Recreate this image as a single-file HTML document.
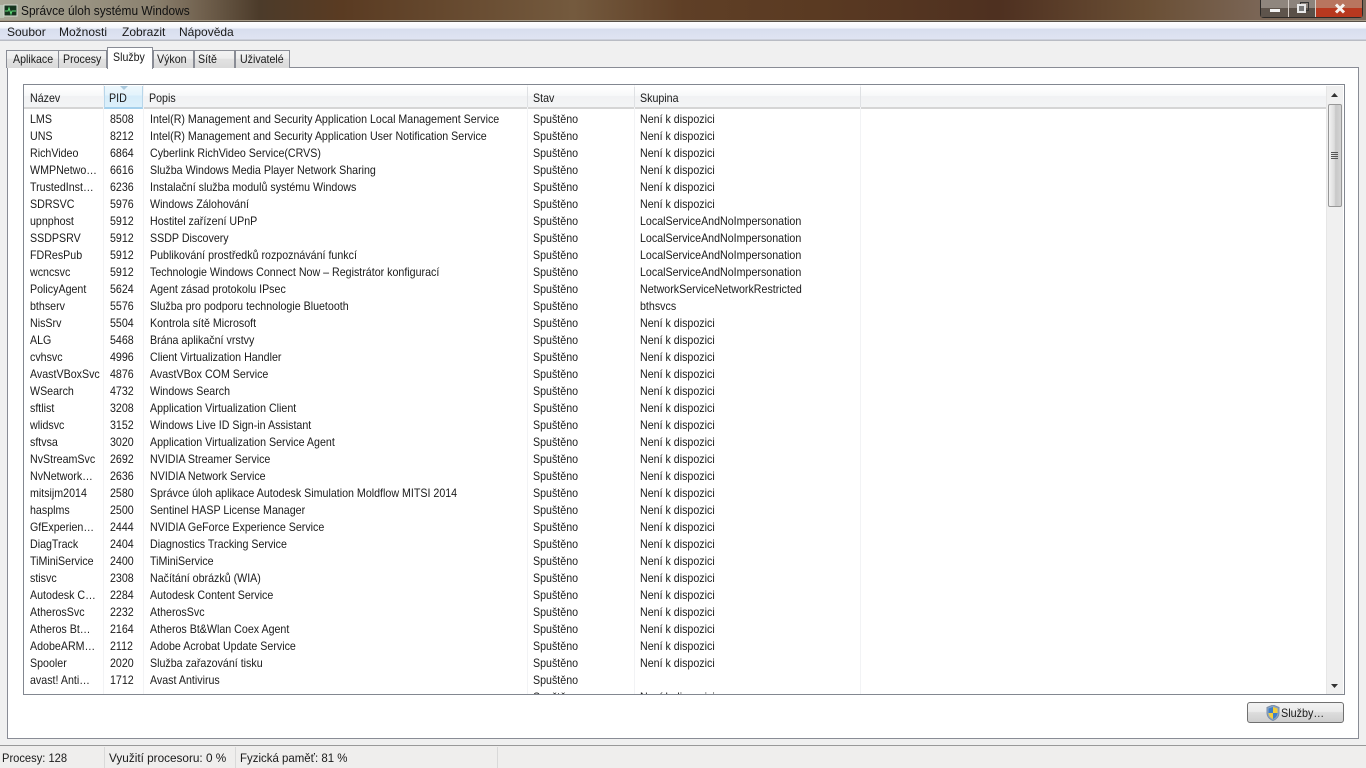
<!DOCTYPE html>
<html lang="cs"><head><meta charset="utf-8"><title>Správce úloh systému Windows</title>
<style>
html,body{margin:0;padding:0;width:1366px;height:768px;overflow:hidden;background:#f0f0f0}
body{font:12px/17px "Liberation Sans",sans-serif;color:#1a1a1a;position:relative}
div,span{position:absolute;white-space:nowrap}
#title{left:0;top:0;width:1366px;height:21px;background:linear-gradient(90deg,#a9a898 0,#8c8270 11%,#6f5f4c 15%,#4c3b2a 19%,#5a3b22 25%,#745a3e 42%,#5f3f26 50%,#5a3a22 60%,#4e3020 73%,#6a4f35 84%,#7a6555 92%,#7c6a5c 100%)}
#tline{left:0;top:20px;width:1366px;height:2px;background:linear-gradient(#cdbfa8,#2e2a26)}
#menu{left:0;top:22px;width:1366px;height:19px;background:linear-gradient(#fff 0,#f3f5fb 6px,#d8deee 7px,#dfe4f2 17px,#b9bcc4 18px)}
.m{top:2px;font-size:12px}
.tab{top:50px;height:17px;border:1px solid #898c95;border-bottom:0;background:linear-gradient(#f3f3f3,#ededed 45%,#e2e2e2 46%,#dadada);font-size:11.8px}
.tab span{top:0;transform:scaleX(.9);transform-origin:0 0}
#panel{left:7px;top:67px;width:1350px;height:670px;border:1px solid #898c95;background:#fff}
#list{left:23px;top:84px;width:1320px;height:609px;border:1px solid #828790;background:#fff;overflow:hidden}
#hd{left:0;top:2px;width:1302px;height:20px;background:linear-gradient(#fff 0,#f7f8f9 45%,#f1f2f4 46%,#f3f4f5);border-bottom:2px solid #d5d5d5}
.cl{top:0;width:1px;height:609px;background:#f2f3f5}
.hs{top:2px;width:1px;height:20px;background:#dfe1e4}
.h{top:5px;font-size:11.6px;transform:scaleX(.92);transform-origin:0 0}
#pid{left:80px;top:1px;width:37px;height:21px;background:linear-gradient(#eef8fd,#e3f3fc 45%,#d5ecfa 46%,#dcf0fb);border-left:1px solid #b8d6ea;border-right:1px solid #b8d6ea;border-bottom:2px solid #a5d0ec}
.r{left:0;width:1302px;height:17px;font-size:11.6px;overflow:visible}
.r span{top:0;transform:scaleX(.92);transform-origin:0 0}
.a{left:6px}.b{left:86px}.c{left:126px}.d{left:509px}.e{left:616px}
#sb{left:1302px;top:1px;width:16px;height:608px;background:#f0f0f0;border-left:1px solid #e6e6e6}
#th{left:1px;top:18px;width:12px;height:101px;border:1px solid #979797;border-radius:2px;background:linear-gradient(90deg,#f3f3f3,#dcdcdc 45%,#c8c8c8 55%,#d4d4d4)}
#btn{left:1247px;top:702px;width:95px;height:19px;border:1px solid #707070;border-radius:3px;background:linear-gradient(#f2f2f2,#ebebeb 45%,#dddddd 50%,#cfcfcf)}
#sl{left:0;top:745px;width:1366px;height:1px;background:#999}
#st{left:0;top:746px;width:1366px;height:22px;background:#efeeed}
.s{top:4px;font-size:12.2px;transform-origin:0 0}
.sp{top:1px;width:1px;height:21px;background:#d9d9d9}
</style></head><body>
<div id="title"></div><div id="tline"></div>
<svg style="position:absolute;left:0;top:1px" width="20" height="18"><rect x="0" y="4" width="4" height="13" fill="#b9c4b5"/><rect x="4" y="4" width="13" height="11" fill="#16351f" stroke="#d6dbd2"/><path d="M5 10h3l1-3 2 6 1-3h4" stroke="#5fe07a" fill="none"/></svg>
<span style="left:21px;top:3px;font-size:12.6px;color:#111;transform:scaleX(.945);transform-origin:0 0">Správce úloh systému Windows</span>
<svg style="position:absolute;left:1260px;top:0" width="104" height="19">
<path d="M.500 0V14Q.500 17.500 4 17.500H99Q102.500 17.500 102.500 14V0Z" fill="#6d625a" stroke="#2d2a28"/>
<rect x="1" y="0" width="27" height="8" fill="#8f867e"/>
<rect x="1" y="8" width="27" height="9" fill="#5e544c"/>
<rect x="29" y="0" width="26" height="8" fill="#8c837c"/>
<rect x="29" y="8" width="26" height="9" fill="#5a5048"/>
<rect x="56" y="0" width="46" height="8" fill="#b8755f"/>
<rect x="56" y="8" width="46" height="9" fill="#b8381f"/>
<path d="M28.500 0V17M55.500 0V17" stroke="#d8d0ca"/>
<rect x="10" y="9" width="10" height="3" fill="#f4f4f4"/>
<rect x="40.500" y="2.500" width="8" height="8" fill="none" stroke="#333"/>
<rect x="38" y="5" width="7" height="7" fill="#777" stroke="#e8e8e8" stroke-width="2"/>
<path d="M76 4.500L84 12.500M84 4.500L76 12.500" stroke="#f6f2ef" stroke-width="3"/>
</svg>
<div id="menu">
<span class="m" style="left:7px">Soubor</span><span class="m" style="left:59px">Možnosti</span><span class="m" style="left:122px">Zobrazit</span><span class="m" style="left:179px">Nápověda</span>
</div>
<div id="panel"></div>
<div class="tab" style="left:6px;width:51px"><span style="left:6px">Aplikace</span></div>
<div class="tab" style="left:58px;width:47px"><span style="left:4px">Procesy</span></div>
<div class="tab" style="left:153px;width:39px"><span style="left:3px">Výkon</span></div>
<div class="tab" style="left:194px;width:39px"><span style="left:3px">Sítě</span></div>
<div class="tab" style="left:235px;width:53px"><span style="left:4px">Uživatelé</span></div>
<div class="tab" style="left:107px;top:47px;width:44px;height:21px;background:#fff"><span style="left:5px;top:1px">Služby</span></div>
<div id="list">
<div id="hd"></div>
<div id="pid"></div>
<svg style="position:absolute;left:96px;top:1px" width="9" height="5"><path d="M0 0H8L4 4Z" fill="#a9c9de"/></svg>
<div class="cl" style="left:79px"></div><div class="cl" style="left:119px"></div><div class="cl" style="left:503px"></div><div class="cl" style="left:610px"></div><div class="cl" style="left:836px"></div>
<div class="hs" style="left:503px"></div><div class="hs" style="left:610px"></div><div class="hs" style="left:836px"></div>
<span class="h" style="left:6px">Název</span><span class="h" style="left:85px">PID</span><span class="h" style="left:125px">Popis</span><span class="h" style="left:509px">Stav</span><span class="h" style="left:616px">Skupina</span>
<div class="r" style="top:26px"><span class="a">LMS</span><span class="b">8508</span><span class="c">Intel(R) Management and Security Application Local Management Service</span><span class="d">Spuštěno</span><span class="e">Není k dispozici</span></div>
<div class="r" style="top:43px"><span class="a">UNS</span><span class="b">8212</span><span class="c">Intel(R) Management and Security Application User Notification Service</span><span class="d">Spuštěno</span><span class="e">Není k dispozici</span></div>
<div class="r" style="top:60px"><span class="a">RichVideo</span><span class="b">6864</span><span class="c">Cyberlink RichVideo Service(CRVS)</span><span class="d">Spuštěno</span><span class="e">Není k dispozici</span></div>
<div class="r" style="top:77px"><span class="a">WMPNetwo…</span><span class="b">6616</span><span class="c">Služba Windows Media Player Network Sharing</span><span class="d">Spuštěno</span><span class="e">Není k dispozici</span></div>
<div class="r" style="top:94px"><span class="a">TrustedInst…</span><span class="b">6236</span><span class="c">Instalační služba modulů systému Windows</span><span class="d">Spuštěno</span><span class="e">Není k dispozici</span></div>
<div class="r" style="top:111px"><span class="a">SDRSVC</span><span class="b">5976</span><span class="c">Windows Zálohování</span><span class="d">Spuštěno</span><span class="e">Není k dispozici</span></div>
<div class="r" style="top:128px"><span class="a">upnphost</span><span class="b">5912</span><span class="c">Hostitel zařízení UPnP</span><span class="d">Spuštěno</span><span class="e">LocalServiceAndNoImpersonation</span></div>
<div class="r" style="top:145px"><span class="a">SSDPSRV</span><span class="b">5912</span><span class="c">SSDP Discovery</span><span class="d">Spuštěno</span><span class="e">LocalServiceAndNoImpersonation</span></div>
<div class="r" style="top:162px"><span class="a">FDResPub</span><span class="b">5912</span><span class="c">Publikování prostředků rozpoznávání funkcí</span><span class="d">Spuštěno</span><span class="e">LocalServiceAndNoImpersonation</span></div>
<div class="r" style="top:179px"><span class="a">wcncsvc</span><span class="b">5912</span><span class="c">Technologie Windows Connect Now – Registrátor konfigurací</span><span class="d">Spuštěno</span><span class="e">LocalServiceAndNoImpersonation</span></div>
<div class="r" style="top:196px"><span class="a">PolicyAgent</span><span class="b">5624</span><span class="c">Agent zásad protokolu IPsec</span><span class="d">Spuštěno</span><span class="e">NetworkServiceNetworkRestricted</span></div>
<div class="r" style="top:213px"><span class="a">bthserv</span><span class="b">5576</span><span class="c">Služba pro podporu technologie Bluetooth</span><span class="d">Spuštěno</span><span class="e">bthsvcs</span></div>
<div class="r" style="top:230px"><span class="a">NisSrv</span><span class="b">5504</span><span class="c">Kontrola sítě Microsoft</span><span class="d">Spuštěno</span><span class="e">Není k dispozici</span></div>
<div class="r" style="top:247px"><span class="a">ALG</span><span class="b">5468</span><span class="c">Brána aplikační vrstvy</span><span class="d">Spuštěno</span><span class="e">Není k dispozici</span></div>
<div class="r" style="top:264px"><span class="a">cvhsvc</span><span class="b">4996</span><span class="c">Client Virtualization Handler</span><span class="d">Spuštěno</span><span class="e">Není k dispozici</span></div>
<div class="r" style="top:281px"><span class="a">AvastVBoxSvc</span><span class="b">4876</span><span class="c">AvastVBox COM Service</span><span class="d">Spuštěno</span><span class="e">Není k dispozici</span></div>
<div class="r" style="top:298px"><span class="a">WSearch</span><span class="b">4732</span><span class="c">Windows Search</span><span class="d">Spuštěno</span><span class="e">Není k dispozici</span></div>
<div class="r" style="top:315px"><span class="a">sftlist</span><span class="b">3208</span><span class="c">Application Virtualization Client</span><span class="d">Spuštěno</span><span class="e">Není k dispozici</span></div>
<div class="r" style="top:332px"><span class="a">wlidsvc</span><span class="b">3152</span><span class="c">Windows Live ID Sign-in Assistant</span><span class="d">Spuštěno</span><span class="e">Není k dispozici</span></div>
<div class="r" style="top:349px"><span class="a">sftvsa</span><span class="b">3020</span><span class="c">Application Virtualization Service Agent</span><span class="d">Spuštěno</span><span class="e">Není k dispozici</span></div>
<div class="r" style="top:366px"><span class="a">NvStreamSvc</span><span class="b">2692</span><span class="c">NVIDIA Streamer Service</span><span class="d">Spuštěno</span><span class="e">Není k dispozici</span></div>
<div class="r" style="top:383px"><span class="a">NvNetwork…</span><span class="b">2636</span><span class="c">NVIDIA Network Service</span><span class="d">Spuštěno</span><span class="e">Není k dispozici</span></div>
<div class="r" style="top:400px"><span class="a">mitsijm2014</span><span class="b">2580</span><span class="c">Správce úloh aplikace Autodesk Simulation Moldflow MITSI 2014</span><span class="d">Spuštěno</span><span class="e">Není k dispozici</span></div>
<div class="r" style="top:417px"><span class="a">hasplms</span><span class="b">2500</span><span class="c">Sentinel HASP License Manager</span><span class="d">Spuštěno</span><span class="e">Není k dispozici</span></div>
<div class="r" style="top:434px"><span class="a">GfExperien…</span><span class="b">2444</span><span class="c">NVIDIA GeForce Experience Service</span><span class="d">Spuštěno</span><span class="e">Není k dispozici</span></div>
<div class="r" style="top:451px"><span class="a">DiagTrack</span><span class="b">2404</span><span class="c">Diagnostics Tracking Service</span><span class="d">Spuštěno</span><span class="e">Není k dispozici</span></div>
<div class="r" style="top:468px"><span class="a">TiMiniService</span><span class="b">2400</span><span class="c">TiMiniService</span><span class="d">Spuštěno</span><span class="e">Není k dispozici</span></div>
<div class="r" style="top:485px"><span class="a">stisvc</span><span class="b">2308</span><span class="c">Načítání obrázků (WIA)</span><span class="d">Spuštěno</span><span class="e">Není k dispozici</span></div>
<div class="r" style="top:502px"><span class="a">Autodesk C…</span><span class="b">2284</span><span class="c">Autodesk Content Service</span><span class="d">Spuštěno</span><span class="e">Není k dispozici</span></div>
<div class="r" style="top:519px"><span class="a">AtherosSvc</span><span class="b">2232</span><span class="c">AtherosSvc</span><span class="d">Spuštěno</span><span class="e">Není k dispozici</span></div>
<div class="r" style="top:536px"><span class="a">Atheros Bt…</span><span class="b">2164</span><span class="c">Atheros Bt&amp;Wlan Coex Agent</span><span class="d">Spuštěno</span><span class="e">Není k dispozici</span></div>
<div class="r" style="top:553px"><span class="a">AdobeARM…</span><span class="b">2112</span><span class="c">Adobe Acrobat Update Service</span><span class="d">Spuštěno</span><span class="e">Není k dispozici</span></div>
<div class="r" style="top:570px"><span class="a">Spooler</span><span class="b">2020</span><span class="c">Služba zařazování tisku</span><span class="d">Spuštěno</span><span class="e">Není k dispozici</span></div>
<div class="r" style="top:587px"><span class="a">avast! Anti…</span><span class="b">1712</span><span class="c">Avast Antivirus</span><span class="d">Spuštěno</span></div>
<div class="r" style="top:604px"><span class="d">Spuštěno</span><span class="e">Není k dispozici</span></div>
<div id="sb">
<svg style="position:absolute;left:3px;top:6px" width="10" height="6"><path d="M1 5H8L4.500 1Z" fill="#333"/></svg>
<div id="th"></div>
<svg style="position:absolute;left:3px;top:65px" width="9" height="10"><path d="M1 1.500H8M1 3.500H8M1 5.500H8M1 7.500H8" stroke="#555"/></svg>
<svg style="position:absolute;left:3px;top:597px" width="10" height="6"><path d="M1 1H8L4.500 5Z" fill="#333"/></svg>
</div>
</div>
<div id="btn">
<svg style="position:absolute;left:17px;top:2px" width="16" height="16"><path d="M8 0L14 2.500V8Q14 13 8 15.500Q2 13 2 8V2.500Z" fill="#8aa6c8" stroke="#7d8fa6"/><path d="M8 2V8H3.500V3.500Z" fill="#3f7fc7"/><path d="M8 2L12.500 3.500V8H8Z" fill="#f3cd3b"/><path d="M3.500 8H8V14Q4 12.500 3.500 8Z" fill="#f3cd3b"/><path d="M8 8H12.500Q12 12.500 8 14Z" fill="#3f7fc7"/></svg>
<span style="left:33px;top:2px;font-size:12px;transform:scaleX(.9);transform-origin:0 0">Služby…</span>
</div>
<div id="sl"></div>
<div id="st">
<span class="s" style="left:2px;transform:scaleX(.915)">Procesy: 128</span><div class="sp" style="left:104px"></div>
<span class="s" style="left:109px;transform:scaleX(.965)">Využití procesoru: 0 %</span><div class="sp" style="left:235px"></div>
<span class="s" style="left:240px;transform:scaleX(.94)">Fyzická paměť: 81 %</span><div class="sp" style="left:497px"></div>
</div>
</body></html>
